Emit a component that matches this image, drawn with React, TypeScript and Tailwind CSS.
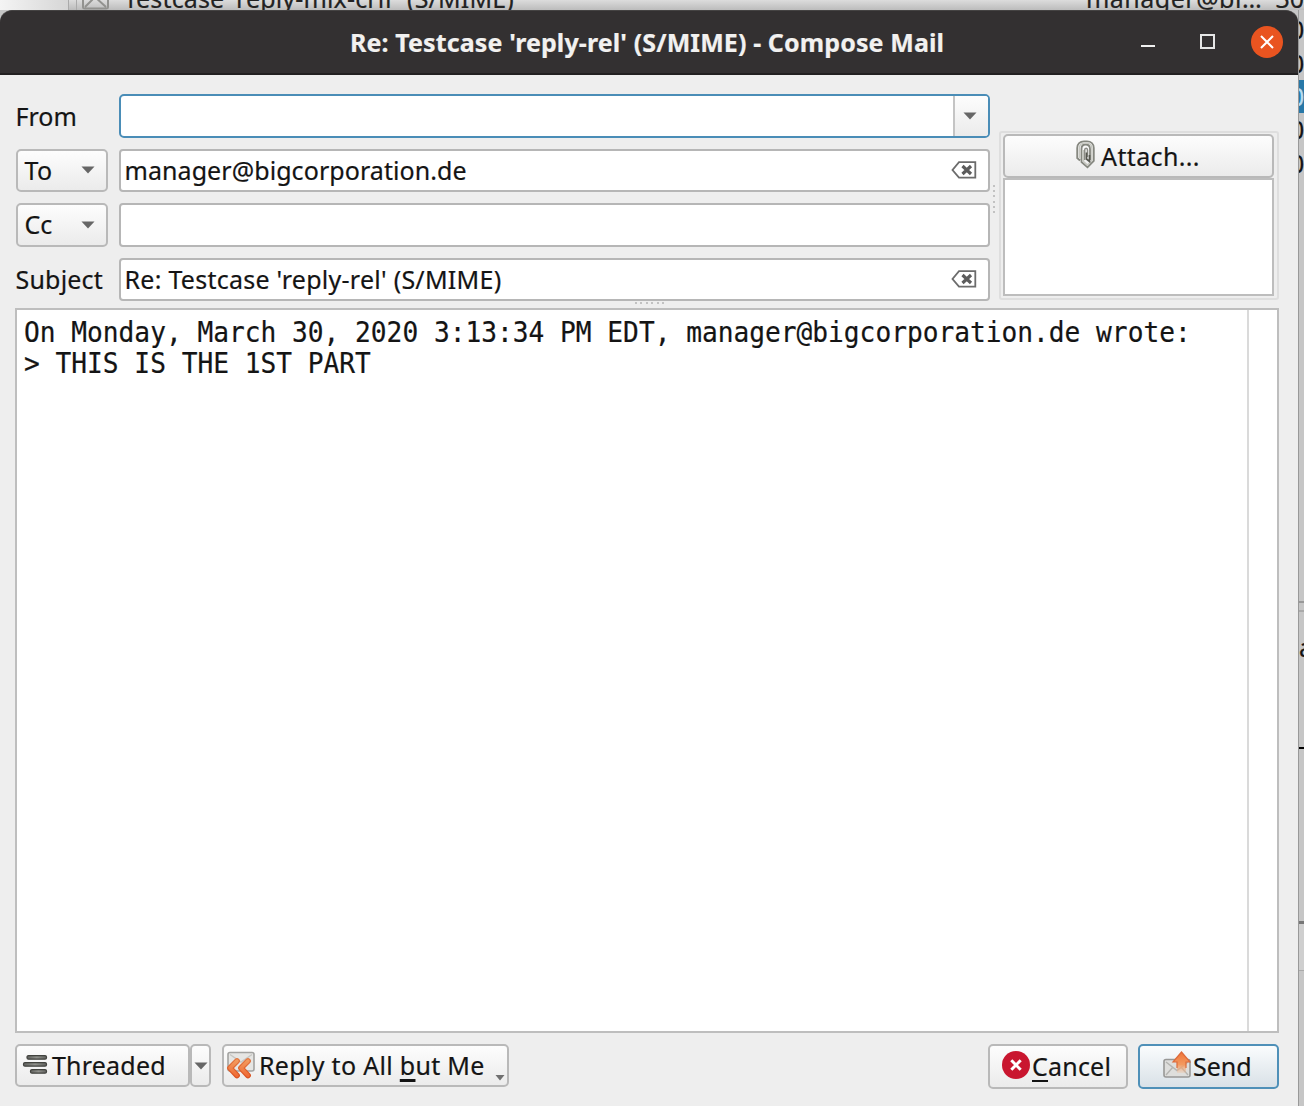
import React from "react";

const field =
  "flex items-center rounded-[4px] border-2 border-[#b6b6b6] bg-white pl-1";
const button =
  "flex items-center rounded-[5px] border-2 border-[#b9b9b9] bg-linear-to-b from-[#fdfdfd] to-[#ebebeb]";

function Caret({ className = "" }: { className?: string }) {
  return (
    <svg className={className} width="14" height="8" viewBox="0 0 14 8">
      <path d="M0.5 0.5H13.5L7 7.5Z" fill="#666" />
    </svg>
  );
}

function ClearIcon() {
  return (
    <svg className="mr-[11px] shrink-0" width="26" height="18" viewBox="0 0 26 18">
      <path d="M8 1.2H24.3V16.6H8L1.5 9Z" fill="#fff" stroke="#6c6c6c" strokeWidth="1.8" />
      <path d="M11.5 5L20 13M20 5L11.5 13" stroke="#5c5c5c" strokeWidth="3.2" />
    </svg>
  );
}

function PaperclipIcon() {
  return (
    <svg className="-mt-[4px]" width="19" height="29" viewBox="0 0 19 29" fill="none">
      <path
        d="M4 20.500L1.200 18V8C1.200 3.800 4 1.300 8 1.300H11C15 1.300 17.800 4 17.800 8V21L11.500 27.300L5.500 22V9C5.500 6.300 7 4.500 9.500 4.500C12.500 4.500 14 6.500 14 9V20"
        stroke="#85877f"
        strokeWidth="1.800"
      />
      <path d="M3.300 18V8.500C3.300 5 5 3.100 8.500 3.100H10.500C14 3.100 15.900 5 15.900 8.500V20.500L11.500 25L7.500 21.500V10" stroke="#c6c7c0" strokeWidth="1.400" />
      <path d="M8.700 20V10C8.700 7.500 11.500 7.500 11.500 10V17" stroke="#8b8c86" strokeWidth="1.500" />
      <path d="M10.500 12.500V19L13.500 21.500V15" stroke="#55564f" strokeWidth="1.700" />
    </svg>
  );
}

function ThreadedIcon() {
  return (
    <svg className="-mt-[2px]" width="26" height="22" viewBox="0 0 26 22">
      <defs>
        <linearGradient id="bar" x1="0" y1="0" x2="1" y2="0">
          <stop offset="0" stopColor="#60615e" />
          <stop offset="0.5" stopColor="#90918c" />
          <stop offset="1" stopColor="#60615e" />
        </linearGradient>
      </defs>
      <rect x="5" y="1.600" width="19.500" height="3.600" rx="1.500" fill="url(#bar)" stroke="#42433f" strokeWidth="1.200" />
      <rect x="1.500" y="8.600" width="23" height="3.600" rx="1.500" fill="url(#bar)" stroke="#42433f" strokeWidth="1.200" />
      <rect x="8.500" y="15.600" width="16" height="3.600" rx="1.500" fill="url(#bar)" stroke="#42433f" strokeWidth="1.200" />
    </svg>
  );
}

function ReplyAllIcon() {
  return (
    <svg className="-mt-px" width="30" height="28" viewBox="0 0 30 28">
      <defs>
        <linearGradient id="chev" x1="0" y1="6" x2="0" y2="27" gradientUnits="userSpaceOnUse">
          <stop offset="0" stopColor="#f3a566" />
          <stop offset="1" stopColor="#ef6530" />
        </linearGradient>
        <linearGradient id="edge" x1="0" y1="6" x2="0" y2="27" gradientUnits="userSpaceOnUse">
          <stop offset="0" stopColor="#e27a45" />
          <stop offset="1" stopColor="#d94f1d" />
        </linearGradient>
      </defs>
      <rect x="2" y="1.500" width="26" height="18.500" rx="2" fill="#e6e6e4" stroke="#a3a3a1" strokeWidth="1.600" />
      <path d="M4 3.500L15 11L26 3.500" fill="none" stroke="#c6c6c3" strokeWidth="1.500" />
      <g fill="none" strokeLinecap="round" strokeLinejoin="round">
        <path d="M11 10L4 17L11 24.500" stroke="url(#edge)" strokeWidth="5.800" />
        <path d="M11 10L4 17L11 24.500" stroke="url(#chev)" strokeWidth="3.400" />
        <path d="M22 10L15 17L22 24.500" stroke="url(#edge)" strokeWidth="5.800" />
        <path d="M22 10L15 17L22 24.500" stroke="url(#chev)" strokeWidth="3.400" />
      </g>
    </svg>
  );
}

function CancelIcon() {
  return (
    <svg className="-mt-[3px]" width="28" height="28" viewBox="0 0 28 28">
      <circle cx="14" cy="14" r="14" fill="#c9162f" />
      <path d="M9.300 9.300L18.700 18.700M18.700 9.300L9.300 18.700" stroke="#fff" strokeWidth="3" />
    </svg>
  );
}

function SendIcon() {
  return (
    <svg className="-mt-[4px]" width="28" height="28" viewBox="0 0 28 28">
      <defs>
        <linearGradient id="up" x1="0" y1="0" x2="0" y2="1">
          <stop offset="0" stopColor="#f07438" />
          <stop offset="0.600" stopColor="#f39a60" />
          <stop offset="1" stopColor="#f6b88c" stopOpacity="0.200" />
        </linearGradient>
      </defs>
      <rect x="1" y="8.500" width="26" height="17.500" rx="2" fill="#dededc" stroke="#989896" strokeWidth="1.600" />
      <path d="M3 11L14 19.500L25 11M3 24L10 16M25 24L18 16" fill="none" stroke="#b4b4b1" strokeWidth="1.400" />
      <path d="M14 22V11H10L18.500 1L27 11H23V22Z" fill="url(#up)" />
      <path d="M14 17V11H10L18.500 1L27 11H23V17" fill="none" stroke="#dd6a3a" strokeWidth="1.200" />
    </svg>
  );
}

function TitleBar() {
  return (
    <header className="flex h-[65px] shrink-0 items-center rounded-t-[12px] border-t border-b-2 border-t-[#454343] border-b-[#222021] bg-[#333031]">
      <h1 className="ml-[350px] w-[780px] text-[25px] font-bold tracking-[0.110px] whitespace-nowrap text-[#f2f1f0]">
        Re: Testcase 'reply-rel' (S/MIME) - Compose Mail
      </h1>
      <div className="mt-[7px] ml-[11px] h-[2px] w-[14px] bg-[#f0f0f0]" />
      <div className="mb-px ml-[45px] h-[15px] w-[15px] border-2 border-[#e6e6e6]" />
      <div className="mb-px ml-[35.500px] flex h-8 w-8 items-center justify-center rounded-full bg-[#e95420]">
        <svg width="14" height="14" viewBox="0 0 14 14">
          <path d="M1 1L13 13M13 1L1 13" stroke="#fff" strokeWidth="2" />
        </svg>
      </div>
    </header>
  );
}

function Dots({ vertical = false }: { vertical?: boolean }) {
  return (
    <div className={vertical ? "flex flex-col gap-[3.400px]" : "flex gap-[3.400px]"}>
      {[0, 1, 2, 3, 4, 5].map((i) => (
        <span key={i} className="h-[2px] w-[2px] bg-[#c2c2c2]" />
      ))}
    </div>
  );
}

function Headers() {
  return (
    <div className="flex w-[974px] flex-col gap-[11px]">
      <div className="flex h-[43.500px]">
        <div className="flex w-[103px] items-center">From</div>
        <div className="flex flex-1 rounded-[5px] border-2 border-[#4a8db7] bg-white">
          <div className="flex-1" />
          <div className="flex w-[35px] items-center justify-center rounded-r-[3px] border-l-2 border-[#c4c4c4] bg-linear-to-b from-[#fdfdfd] to-[#ebebeb]">
            <Caret className="mr-[2px]" />
          </div>
        </div>
      </div>
      <div className="flex h-[43.500px]">
        <div className={`${button} mr-[11px] w-[92px] justify-between pr-[11px] pl-[7px]`}>
          <span className="tracking-[0.300px]">To</span>
          <Caret />
        </div>
        <div className={`${field} flex-1 justify-between`}>
          <span className="tracking-[0.070px]">manager@bigcorporation.de</span>
          <ClearIcon />
        </div>
      </div>
      <div className="flex h-[43.500px]">
        <div className={`${button} mr-[11px] w-[92px] justify-between pr-[11px] pl-[7px]`}>
          <span className="-mt-px">Cc</span>
          <Caret />
        </div>
        <div className={`${field} flex-1`} />
      </div>
      <div className="flex h-[43.500px]">
        <div className="flex w-[103px] items-center pb-px tracking-[0.200px]">Subject</div>
        <div className={`${field} flex-1 justify-between`}>
          <span className="-mt-px tracking-[0.260px]">Re: Testcase 'reply-rel' (S/MIME)</span>
          <ClearIcon />
        </div>
      </div>
    </div>
  );
}

export default function App() {
  return (
    <div className="relative h-[1106px] w-[1304px] overflow-hidden bg-[#c6c6c6] font-['Noto_Sans',sans-serif] text-[25px] leading-[32px] text-[#141414] [-webkit-text-stroke:0.2px]">
      <div className="flex h-[10px] overflow-hidden bg-linear-to-b from-[#dcdcdc] to-[#bcbcbc] whitespace-nowrap">
        <div className="h-full w-[68px] bg-linear-to-r from-[#f4f4f4] to-[#d6d6d6]" />
        <div className="h-full w-[9px] border-x border-[#aaa]" />
        <svg className="ml-[5px] shrink-0" width="27" height="10" viewBox="0 0 27 10">
          <path d="M1 0V7Q1 8.500 3 8.500H24Q26 8.500 26 7V0M3 7L13 -3L24 7" fill="none" stroke="#92928f" strokeWidth="2" />
        </svg>
        <span className="mt-[-18px] ml-[15px] w-[965px] tracking-[0.150px] text-[#222]">Testcase 'reply-mix-crlf' (S/MIME)</span>
        <span className="mt-[-18px] w-[190px] tracking-[0.500px] text-[#222]">manager@bi…</span>
        <span className="mt-[-18px] text-[#222]">30</span>
      </div>
      <div className="flex h-[1096px]">
        <main className="flex w-[1298px] shrink-0 flex-col rounded-t-[12px] bg-[#eee]">
          <TitleBar />
          <section className="flex h-[233px] shrink-0 pl-[15.500px]">
            <div className="pt-[19px]">
              <Headers />
            </div>
            <div className="flex w-[9px] items-center justify-center pt-[15px]">
              <Dots vertical />
            </div>
            <aside className="mt-[55.500px] h-[169px] w-[280px] rounded-[3px] border-2 border-[#dedede] p-[2px] pt-[1.500px]">
              <div className={`${button} h-[44px] w-[271px] justify-center gap-[6px]`}>
                <PaperclipIcon />
                <span className="-mt-px tracking-[0.350px]">Attach...</span>
              </div>
              <div className="h-[117.500px] w-[271px] border-2 border-[#bdbdbd] bg-white" />
            </aside>
          </section>
          <div className="relative mr-[19px] ml-[15px] h-[725px] shrink-0 border-2 border-[#bebebe] bg-white">
            <div className="absolute top-[-8px] left-[618px]">
              <Dots />
            </div>
            <div className="h-full w-[1232px] border-r-2 border-[#dadada] pt-[6.500px] pl-[7px]">
              <pre className="origin-top scale-y-[1.070] font-['DejaVu_Sans_Mono',monospace] text-[26.190px] leading-[29.300px]">
                {"On Monday, March 30, 2020 3:13:34 PM EDT, manager@bigcorporation.de wrote:\n> THIS IS THE 1ST PART"}
              </pre>
            </div>
          </div>
          <footer className="flex pt-[11px] pr-[19px] pl-[15px]">
            <div className={`${button} h-[43px] w-[175px] gap-[4px] pl-[5px]`}>
              <ThreadedIcon />
              <span className="-mt-px tracking-[0.200px]">Threaded</span>
            </div>
            <div className={`${button} h-[43px] w-[21px] justify-center`}>
              <Caret className="shrink-0" />
            </div>
            <div className={`${button} relative ml-[11px] h-[43px] w-[287px] gap-[3px] pl-[2px]`}>
              <ReplyAllIcon />
              <span className="-mt-px tracking-[0.310px] whitespace-nowrap">
                Reply to All <u className="decoration-[3px] underline-offset-[4px]">b</u>ut Me
              </span>
              <svg className="absolute right-[2px] bottom-[4px]" width="10" height="6" viewBox="0 0 10 6">
                <path d="M0.500 0H9.500L5 5.500Z" fill="#707070" />
              </svg>
            </div>
            <div className={`${button} ml-auto h-[45px] w-[140px] gap-[2px] pl-[12px]`}>
              <CancelIcon />
              <span className="-mt-[2px] tracking-[0.200px]">
                <u className="decoration-[2px] underline-offset-[4px]">C</u>ancel
              </span>
            </div>
            <div className="ml-[10px] flex h-[45px] w-[141px] items-center gap-[2px] rounded-[5px] border-2 border-[#4f90b8] bg-linear-to-b from-[#fafcfd] to-[#d9e1e7] pl-[23px]">
              <SendIcon />
              <span className="-mt-[2px]">Send</span>
            </div>
          </footer>
        </main>
        <div className="flex w-[6px] shrink-0 flex-col overflow-hidden border-l border-[#999] bg-[#c6c6c6]">
          <div className="flex h-[593px] shrink-0 flex-col border-b-2 border-[#999] pt-[3px]">
            <span className="ml-[-9px] h-[34px]">0</span>
            <span className="ml-[-9px] h-[33px]">0</span>
            <div className="h-[33px] bg-[#2878a8]">
              <span className="ml-[-9px] text-[#b9dcf0]">0</span>
            </div>
            <span className="ml-[-9px] h-[34px]">0</span>
            <span className="ml-[-9px] h-[34px]">0</span>
          </div>
          <div className="h-[9px] shrink-0 border-b-2 border-[#aaa]" />
          <div className="h-[137px] shrink-0 border-b-2 border-black pt-[19px]">
            <span>a</span>
          </div>
          <div className="h-[175px] shrink-0 border-b-[3px] border-[#777]" />
          <div className="h-[47px] shrink-0 border-b border-[#aaa] bg-[#cfcfcf]" />
        </div>
      </div>
    </div>
  );
}
